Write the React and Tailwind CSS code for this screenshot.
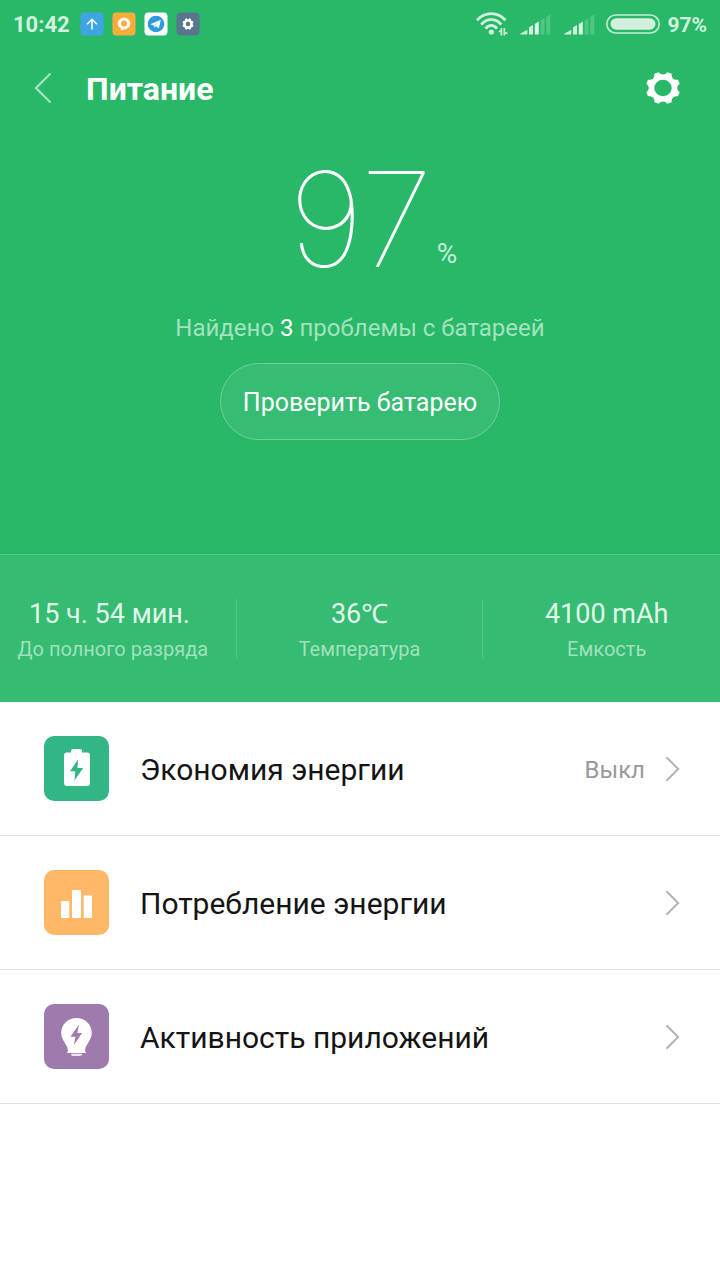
import React from "react";

function gearPath({ cx, cy, outer, root, valley, hole, tip, base, teeth }) {
  const step = (Math.PI * 2) / teeth;
  const point = (r, a) => `${(cx + r * Math.cos(a)).toFixed(2)} ${(cy + r * Math.sin(a)).toFixed(2)}`;
  let d = "";
  for (let i = 0; i < teeth; i += 1) {
    const a = (i + 0.5) * step;
    d += `${i === 0 ? "M" : "L"}${point(root, a - step * base)}`;
    d += `L${point(outer, a - step * tip)}L${point(outer, a + step * tip)}`;
    d += `L${point(root, a + step * base)}`;
    d += `Q${point(valley, a + step * 0.5)} ${point(root, a + step * (1 - base))}`;
  }
  d += `ZM${cx - hole} ${cy}a${hole} ${hole} 0 1 0 ${hole * 2} 0a${hole} ${hole} 0 1 0 ${-hole * 2} 0Z`;
  return d;
}

const largeGear = gearPath({ cx: 18, cy: 18, outer: 16.4, root: 14.4, valley: 12.6, hole: 8.3, tip: 0.16, base: 0.27, teeth: 8 });
const smallGear = gearPath({ cx: 12, cy: 12, outer: 5.8, root: 5, valley: 4.4, hole: 2.2, tip: 0.2, base: 0.29, teeth: 8 });

function UploadBadge() {
  return (
    <svg className="size-6" viewBox="0 0 24 24" fill="none" aria-hidden="true">
      <rect x="0.5" y="0.5" width="23" height="23" rx="4" fill="#3fa4e3" />
      <path d="M12 17.5V7.5M7 12.2l5-5 5 5" stroke="#fff" strokeWidth="1.5" />
    </svg>
  );
}

function ChatBadge() {
  return (
    <svg className="size-6" viewBox="0 0 24 24" fill="none" aria-hidden="true">
      <rect x="0.5" y="0.5" width="23" height="23" rx="4" fill="#fbab3a" />
      <path
        fillRule="evenodd"
        fill="#fff"
        d="M12 5.800c3.600 0 6.200 2.500 6.200 5.700s-2.400 5.400-5.600 5.700L9 18.600l.2-2C7.100 15.700 5.800 13.800 5.800 11.500 5.800 8.300 8.400 5.800 12 5.800ZM12 8.600a3 3 0 1 0 0 6 3 3 0 0 0 0-6Z"
      />
    </svg>
  );
}

function TelegramBadge() {
  return (
    <svg className="size-6" viewBox="0 0 24 24" fill="none" aria-hidden="true">
      <rect x="0.5" y="0.5" width="23" height="23" rx="4" fill="#fff" />
      <circle cx="12" cy="12" r="8.300" fill="#2c9bdb" />
      <path d="M6.300 12.200 16.800 7.800 14.900 16.300 11.600 14.200 10.200 15.600 9.500 13.200Z" fill="#fff" />
      <path d="M9.700 13.200 14.600 9.700 11 13.600 10.200 15.500Z" fill="#a9d3ee" />
    </svg>
  );
}

function SettingsBadge() {
  return (
    <svg className="size-6" viewBox="0 0 24 24" aria-hidden="true">
      <rect x="0.5" y="0.5" width="23" height="23" rx="4" fill="#58758d" />
      <path d={smallGear} fillRule="evenodd" fill="#fff" />
    </svg>
  );
}

function WifiIcon() {
  return (
    <svg className="h-6 w-8" viewBox="0 0 32 24" fill="none" aria-hidden="true">
      <g stroke="#d3f1e0" strokeWidth="2.800">
        <path d="M1 8.200C9 -0.600 21.500 -0.600 29.500 8.200" />
        <path d="M5.200 12.600C11 6 19.500 6 25.300 12.600" />
        <path d="M9.600 16.600C13 12.400 17.600 12.400 21 16.600" />
      </g>
      <circle cx="15.300" cy="20" r="2.600" fill="#d3f1e0" />
      <path d="M22.800 18.500H24.500V16h1.800v7.500h-1.800v-3.200h-1.700ZM27.500 16h1.700v4.200h2.300v1.800h-2.300v1.500h-1.700Z" fill="#c3ecd5" />
    </svg>
  );
}

function SignalIcon() {
  return (
    <svg className="h-6 w-8" viewBox="0 0 32 24" aria-hidden="true">
      <path d="M0.500 22.500V21.500L7.300 17.800V22.500Z" fill="#c9f0d9" />
      <path d="M9 22.500V15.300L13 13V22.500Z" fill="#c9f0d9" />
      <path d="M14.800 22.500V12L18.800 9.500V22.500Z" fill="#d9f6e4" />
      <path d="M20.600 22.500V8.400L24.500 6V22.500ZM26.300 22.500V5L30.200 2.500V22.500Z" fill="#4fc681" />
    </svg>
  );
}

function BatteryIcon() {
  return (
    <svg className="h-6 w-14" viewBox="0 0 56 24" fill="none" aria-hidden="true">
      <rect x="1.800" y="3" width="52.400" height="18" rx="9" stroke="#c3edd5" strokeWidth="1.600" />
      <rect x="5.500" y="6.200" width="45" height="11.600" rx="5.800" fill="#d3f0df" />
    </svg>
  );
}

function Chevron({ left = false, className }) {
  return (
    <svg className={className} viewBox="0 0 18 32" fill="none" stroke="currentColor" aria-hidden="true">
      <path d={left ? "M16.500 1.500 2 16l14.500 14.500" : "M1.500 1.500 16 16 1.500 30.500"} strokeWidth="2.400" />
    </svg>
  );
}

function SaverIcon() {
  return (
    <svg className="size-[65px] shrink-0" viewBox="0 0 65 65" aria-hidden="true">
      <rect width="65" height="65" rx="10" fill="#32b684" />
      <path
        fill="#fff"
        d="M27 16.500V15q0-2 2-2h7q2 0 2 2v1.500h5q3 0 3 3V47q0 3-3 3H23q-3 0-3-3V19.500q0-3 3-3Z"
      />
      <path fill="#32b684" d="M34 23.500 26 35.200h5.400L30.500 44.500 39.200 32h-5.700Z" />
    </svg>
  );
}

function UsageIcon() {
  return (
    <svg className="size-[65px] shrink-0" viewBox="0 0 65 65" aria-hidden="true">
      <rect width="65" height="65" rx="10" fill="#ffb866" />
      <g fill="#fff">
        <rect x="17" y="31" width="8.300" height="17" rx="1" />
        <rect x="28" y="20" width="9" height="28" rx="1" />
        <rect x="39.700" y="25.500" width="8.300" height="22.500" rx="1" />
      </g>
    </svg>
  );
}

function AppsIcon() {
  return (
    <svg className="size-[65px] shrink-0" viewBox="0 0 65 65" aria-hidden="true">
      <rect width="65" height="65" rx="10" fill="#9f7aac" />
      <path
        fill="#fff"
        d="M32.500 14c8.800 0 15.300 6.700 15.300 15 0 7.500-6.800 11.500-6.800 18l1 1.500q0 .5-.7.500H23.700q-.7 0-.7-.5l1-1.500c0-6.500-6.800-10.500-6.800-18 0-8.300 6.500-15 15.300-15Z"
      />
      <path fill="#efe8f1" d="M27 49.800h11q0 2.200-2 2.200h-7q-2 0-2-2.200Z" />
      <path fill="#9f7aac" d="M35 20.500 26.500 32.700h5L30 41 38 29h-4.700Z" />
    </svg>
  );
}

const stats = [
  { value: "15 ч. 54 мин.\u00a0", label: "До полного разряда" },
  { value: "36℃", label: "Температура" },
  { value: "4100 mAh", label: "Емкость" },
];

const items = [
  { title: "Экономия энергии", note: "Выкл", Icon: SaverIcon },
  { title: "Потребление энергии", Icon: UsageIcon },
  { title: "Активность приложений", Icon: AppsIcon },
];

export default function App() {
  return (
    <div className="min-h-screen bg-white font-['Roboto','Noto_Sans',sans-serif] text-white">
      <div className="bg-[#28b868]">
        <div className="flex h-12 items-center justify-between px-[13px] text-[#d0f2de]">
          <div className="flex items-center gap-2">
            <span className="mr-0.5 pt-0.5 text-[22px] leading-6 font-bold">10:42</span>
            <UploadBadge />
            <ChatBadge />
            <TelegramBadge />
            <SettingsBadge />
          </div>
          <div className="flex items-center">
            <WifiIcon />
            <span className="ml-3 flex gap-3">
              <SignalIcon />
              <SignalIcon />
            </span>
            <span className="ml-[9px]">
              <BatteryIcon />
            </span>
            <span className="ml-1.5 pt-0.5 text-[21px] leading-6 font-bold">97%</span>
          </div>
        </div>

        <header className="flex h-20 items-center pr-[38px] pl-[34px]">
          <button type="button" aria-label="Назад" className="text-[#9fe3bd]">
            <Chevron left className="h-8 w-[18px]" />
          </button>
          <h1 className="ml-[34px] pt-0.5 text-[32px] leading-10 font-bold">Питание</h1>
          <button type="button" aria-label="Настройки" className="ml-auto">
            <svg className="h-9 w-[38px]" viewBox="0 0 36 36" preserveAspectRatio="none" aria-hidden="true">
              <path d={largeGear} fillRule="evenodd" fill="#fff" />
            </svg>
          </button>
        </header>

        <section className="flex h-[426px] flex-col items-center pt-5">
          <div className="flex items-end pl-[26px]">
            <span className="font-['Inter',sans-serif] text-[132px] leading-[142px] font-thin">97</span>
            <span className="mb-4 ml-1 text-[28px] leading-10 text-[#c3efd5]">%</span>
          </div>
          <p className="mt-[22px] text-2xl text-[#a3e2bf]">
            Найдено <span className="text-white">3</span> проблемы с батареей
          </p>
          <button
            type="button"
            className="mt-[19px] h-[77px] rounded-full border border-[#71d09a] bg-[#36bc73] px-[22px] pt-0.5 text-[25px]"
          >
            Проверить батарею
          </button>
        </section>

        <section className="overflow-hidden border-t border-[#53c885] bg-[#35bb72]">
          <dl className="-mx-2.5 grid h-[147px] grid-cols-3 items-center divide-x divide-[#53c885] text-center">
            {stats.map(({ value, label }) => (
              <div key={label} className="flex flex-col-reverse gap-2.5">
                <dt className="text-xl leading-5 text-[#a0e1bd]">{label}</dt>
                <dd className="text-[27px] leading-[30px] whitespace-pre text-[#e1f7ea]">{value}</dd>
              </div>
            ))}
          </dl>
        </section>
      </div>

      <ul className="text-[#141414]">
        {items.map(({ title, note, Icon }) => (
          <li key={title} className="border-b border-[#e3e3e3]">
            <button type="button" className="flex h-[133px] w-full items-center pr-10 pl-11 text-left">
              <Icon />
              <span className="ml-[31px] pt-0.5 text-[30px] leading-10">{title}</span>
              <span className="ml-auto pt-0.5 text-2xl text-[#999]">{note}</span>
              <Chevron className="ml-5 h-[26px] w-[15px] text-[#b2b2b2]" />
            </button>
          </li>
        ))}
      </ul>
    </div>
  );
}
